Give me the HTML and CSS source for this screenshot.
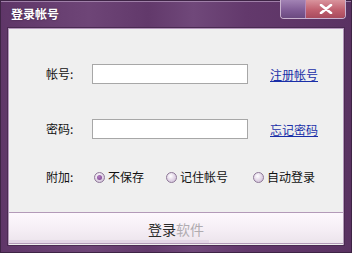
FILE: index.html
```html
<!DOCTYPE html>
<html>
<head>
<meta charset="utf-8">
<link rel="stylesheet" href="styles.css">
</head>
<body>
<div class="window">
  <div class="titlebar">
    <span class="title">登录帐号</span>
    <div class="caption-btns">
      <span class="cap-min"></span>
      <span class="cap-close"><svg width="14" height="10" viewBox="0 0 14 10"><path d="M2 1 L12 9 M12 1 L2 9" stroke="#ffffff" stroke-width="2.6" stroke-linecap="round"/></svg></span>
    </div>
  </div>
  <div class="body">
    <div class="row row-user">
      <span class="label">帐号:</span>
      <span class="input"></span>
      <a class="link">注册帐号</a>
    </div>
    <div class="row row-pass">
      <span class="label">密码:</span>
      <span class="input"></span>
      <a class="link">忘记密码</a>
    </div>
    <div class="row row-opt">
      <span class="label">附加:</span>
      <div class="radios">
        <span class="radio checked"><i class="dot"></i>不保存</span>
        <span class="radio r2"><i class="dot"></i>记住帐号</span>
        <span class="radio r3"><i class="dot"></i>自动登录</span>
      </div>
    </div>
    <div class="login-btn">
      <span class="btn-text"><span class="on">登录</span><span class="off">软件</span></span>
      <span class="progress"></span>
    </div>
  </div>
</div>
</body>
</html>
```
FILE: styles.css
```css
html, body {
  margin: 0;
  padding: 0;
}
body {
  width: 352px;
  height: 253px;
  overflow: hidden;
  font-family: "Noto Sans CJK SC", "DejaVu Sans", sans-serif;
  font-size: 12px;
  color: #111;
}
.window {
  width: 352px;
  height: 253px;
  box-sizing: border-box;
  padding: 0 7px 7px 7px;
  display: flex;
  flex-direction: column;
  background: linear-gradient(90deg, #5f3668 0%, #6e4577 25%, #62396b 42%, #70487a 55%, #63396c 70%, #5a3262 100%);
  border: 1px solid #3e2445;
  box-shadow: inset 0 1px 0 #9f7fa8;
}
.titlebar {
  height: 27px;
  display: flex;
  align-items: flex-start;
  justify-content: space-between;
  position: relative;
}
.title {
  margin-top: 4px;
  margin-left: 3px;
  color: #ffffff;
  font-weight: bold;
  font-size: 12px;
  line-height: 18px;
  text-shadow: 0 0 2px #3a1f40;
}
.caption-btns {
  display: flex;
  margin-right: -2px;
  margin-top: -1px;
  height: 18px;
  border: 1px solid #c9b2cf;
  border-top: none;
  border-radius: 0 0 4px 4px;
  overflow: hidden;
}
.cap-min {
  width: 24px;
  background: linear-gradient(180deg, #a283b4 0%, #7e5a94 60%, #6b4a80 100%);
}
.cap-close {
  width: 39px;
  display: flex;
  align-items: center;
  justify-content: center;
  background: linear-gradient(180deg, #d9949d 0%, #c0606f 55%, #a84a5d 100%);
  border-left: 1px solid #b58ab8;
}
.body {
  flex: 1;
  background: #efefef;
  border: 1px solid #b497bb;
  border-bottom: none;
  box-shadow: 0 0 0 1px #4a2a52;
  display: flex;
  flex-direction: column;
  padding-top: 35px;
}
.row {
  display: flex;
  align-items: center;
  padding-left: 37px;
}
.label {
  width: 46px;
  line-height: 20px;
  font-size: 12px;
}
.input {
  width: 154px;
  height: 18px;
  background: #ffffff;
  border: 1px solid #a7a7a7;
}
.link {
  margin-left: 22px;
  color: #1a2fa8;
  text-decoration: underline;
  font-size: 12px;
}
.row-pass {
  margin-top: 35px;
}
.row-opt {
  margin-top: 30px;
  height: 16px;
}
.radios {
  display: flex;
  align-items: center;
  margin-left: 2px;
}
.radio {
  display: flex;
  align-items: center;
  gap: 3px;
  line-height: 16px;
}
.radio.r2 { margin-left: 22px; }
.radio.r3 { margin-left: 25px; }
.dot {
  width: 9px;
  height: 9px;
  border-radius: 50%;
  border: 1px solid #8e7898;
  background: radial-gradient(circle at 40% 35%, #ffffff 0%, #e6dbea 45%, #c8b5d2 100%);
  display: inline-block;
  position: relative;
}
.radio.checked .dot::after {
  content: "";
  position: absolute;
  left: 2px;
  top: 2px;
  width: 5px;
  height: 5px;
  border-radius: 50%;
  background: radial-gradient(circle at 40% 35%, #b07ac0 0%, #7a3f8a 100%);
}
.login-btn {
  margin-top: 27px;
  height: 30px;
  margin-left: -1px;
  margin-right: -1px;
  border: 1px solid #b39ab8;
  background: linear-gradient(180deg, #fdf8fd 0%, #f6eff6 50%, #ece4ec 100%);
  display: flex;
  align-items: center;
  justify-content: center;
  position: relative;
}
.btn-text {
  font-size: 14px;
  margin-top: 1px;
}
.on { color: #2a2a2a; }
.off { color: #b0acb0; }
.progress {
  position: absolute;
  left: 0;
  bottom: 0;
  width: 200px;
  height: 3px;
  background: #e3d6e6;
}
```
